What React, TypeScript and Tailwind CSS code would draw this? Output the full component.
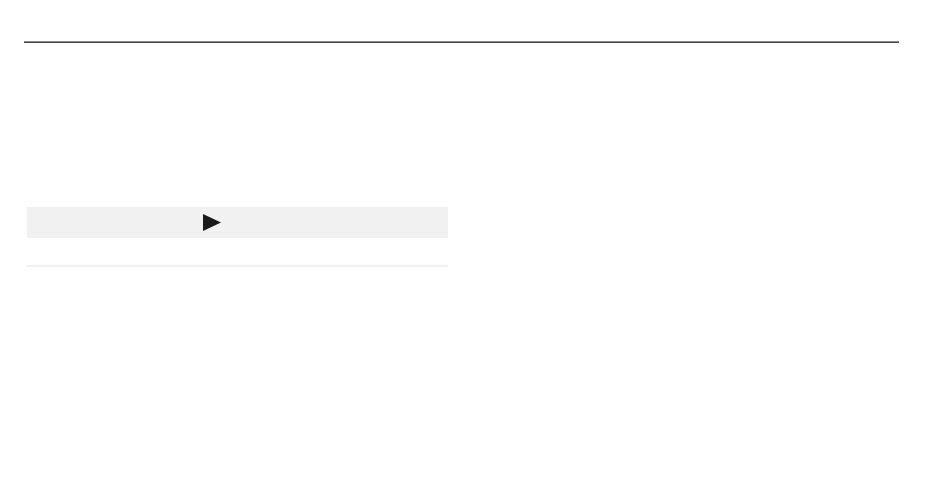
import React from 'react';

function Player() {
  return (
    <div className="ml-[27px] mt-[164px] w-[421px]">
      <div className="flex h-[31px] items-center bg-[#f1f1f1] pl-[176px]">
        <svg width="18" height="17" viewBox="0 0 18 17" className="block">
          <path d="M0 0 L18 8.5 L0 17 Z" fill="#1a1a1a" />
        </svg>
      </div>
      <div className="mt-[27px] h-[2px] bg-[#f0f0f0]" />
    </div>
  );
}

export default function App() {
  return (
    <div className="min-h-screen w-full bg-white font-['Liberation_Sans',sans-serif]">
      <div className="pt-[41px]">
        <div className="ml-[24px] h-[2px] w-[875px] border-t border-[#8c8c8c] bg-[#444444]" />
      </div>
      <Player />
    </div>
  );
}
